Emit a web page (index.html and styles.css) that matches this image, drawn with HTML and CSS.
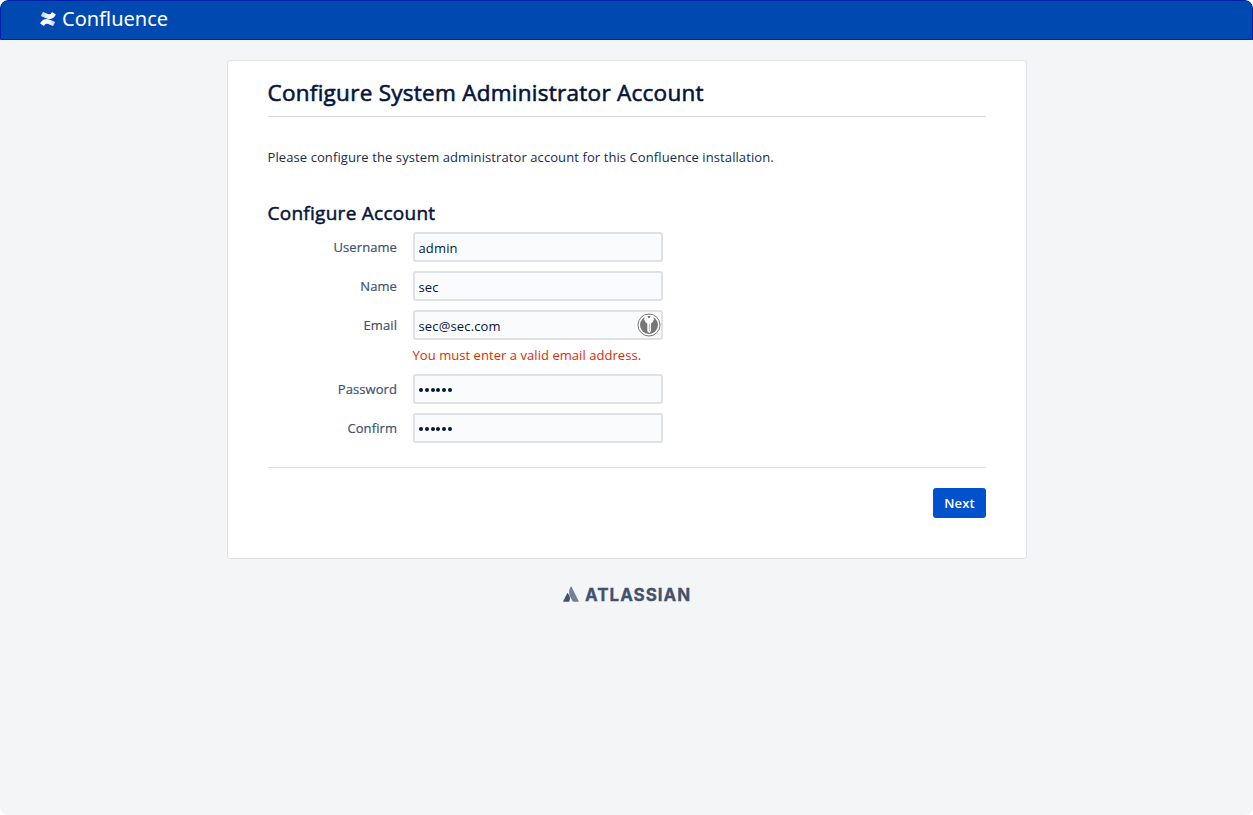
FILE: index.html
```html
<!DOCTYPE html>
<html lang="en">
<head>
<meta charset="utf-8">
<title>Configure System Administrator Account - Confluence</title>
<link rel="stylesheet" href="styles.css">
</head>
<body>
<div class="window">
  <header class="header">
    <svg class="header-mark" width="16" height="16" viewBox="0 0 16 16">
      <defs>
        <linearGradient id="lower" x1="0" y1="0" x2="1" y2="0"><stop offset="0" stop-color="#fff"/><stop offset=".5" stop-color="#fff"/><stop offset="1" stop-color="#fff" stop-opacity=".75"/></linearGradient>
        <linearGradient id="upper" x1="0" y1="0" x2="1" y2="0"><stop offset="0" stop-color="#fff" stop-opacity=".75"/><stop offset=".6" stop-color="#fff"/></linearGradient>
      </defs>
      <path fill="url(#lower)" d="M.6 11.6 .3 12.2Q.1 12.6.5 12.8L3.6 14.7Q4 14.9 4.3 14.5C5.5 12.5 6.2 12.3 8.2 13.1L12.7 14.9Q13.2 15 13.4 14.6L15 11.4Q15.1 11 14.7 10.8L10.6 9C6.4 7.2 3 8 .6 11.6Z"/>
      <path fill="url(#upper)" d="M15.4 4.4 15.7 3.8Q15.9 3.4 15.5 3.2L12.4 1.3Q12 1.1 11.7 1.5C10.5 3.5 9.8 3.7 7.8 2.9L3.3 1.1Q2.8 1 2.6 1.4L1 4.6Q.9 5 1.3 5.2L5.4 7C9.6 8.8 13 8 15.4 4.4Z"/>
    </svg>
    <span class="header-name">Confluence</span>
  </header>
  <main class="panel">
    <h1 class="title"><span>Configure System Administrator Account</span></h1>
    <p class="intro">Please configure the system administrator account for this Confluence installation.</p>
    <h2 class="subtitle">Configure Account</h2>
    <form class="form">
      <div class="row"><label class="label" for="username">Username</label><input class="field" id="username" type="text" value="admin"></div>
      <div class="row"><label class="label" for="name">Name</label><input class="field" id="name" type="text" value="sec"></div>
      <div class="row">
        <label class="label" for="email">Email</label>
        <div class="field-wrap">
          <input class="field" id="email" type="text" value="sec@sec.com">
          <svg class="key" width="24" height="24" viewBox="0 0 24 24">
            <circle cx="12" cy="12" r="11" fill="#fff" stroke="#777" stroke-width="1"/>
            <circle cx="12" cy="12" r="9" fill="#777"/>
            <path fill="#fff" d="M8.2 2.8H15.8L17 6.3 15.5 9.3 14 10.5V18L12.5 20 10.3 18.3V10.5L8.5 9.3 7 6.3Z"/>
            <path fill="#444" d="M10.3 3.2h3.4L12 5.2Z"/>
            <path d="M12.4 11V18.2" stroke="#aaa" stroke-width=".8"/>
          </svg>
        </div>
      </div>
      <p class="error">You must enter a valid email address.</p>
      <div class="row"><label class="label" for="password">Password</label><div class="field masked" id="password"><i></i><i></i><i></i><i></i><i></i><i></i></div></div>
      <div class="row"><label class="label" for="confirm">Confirm</label><div class="field masked" id="confirm"><i></i><i></i><i></i><i></i><i></i><i></i></div></div>
      <div class="actions"><button class="next" type="button">Next</button></div>
    </form>
  </main>
  <footer class="footer">
    <svg class="footer-mark" width="16" height="16" viewBox="0 0 16 16">
      <path fill="#42526e" d="M4.8 7.2Q4.5 6.8 4.2 7.3L.2 15.2Q0 15.7.5 15.7H5.9Q6.2 15.7 6.4 15.3C7.6 12.8 6.9 9.2 4.8 7.2Z"/>
      <path fill="#71809a" d="M7.7.4C5.5 3.9 5.7 7.7 7.1 10.5L9.6 15.3Q9.8 15.7 10.2 15.7H15.4Q16 15.7 15.7 15.2L8.4.4Q8 0 7.7.4Z"/>
    </svg>
    <span class="footer-name">ATLASSIAN</span>
  </footer>
</div>
</body>
</html>
```
FILE: styles.css
```css
* { box-sizing: border-box; }
body {
  margin: 0;
  background: #fff;
  color: #172b4d;
  font-family: "Open Sans", "Noto Sans", sans-serif;
  font-size: 13px;
}
h1, h2, p { margin: 0; white-space: nowrap; }
.window {
  height: 815px;
  overflow: hidden;
  border-radius: 8px;
  background: #f4f5f7;
}
.header {
  display: flex;
  align-items: center;
  height: 40px;
  padding: 0 0 2px 39px;
  border: 1px solid #0021a6;
  border-radius: 8px 8px 0 0;
  background: #0049b0;
}
.header-name {
  margin-left: 6px;
  color: #fff;
  font: 400 20px/30px "Noto Sans", sans-serif;
}
.panel {
  width: 800px;
  height: 499px;
  margin: 20px 0 0 227px;
  padding: 0 40px;
  border: 1px solid #dfe1e6;
  border-radius: 3px;
  background: #fff;
}
.title {
  height: 56px;
  padding-top: 16px;
  border-bottom: 1px solid #dcdcdf;
  color: #04153c;
  font-size: 22.5px;
  font-weight: 400;
  letter-spacing: .27px;
  line-height: 32px;
  -webkit-text-stroke: .6px #04153c;
}
.title span { margin-left: -.5px; }
.intro { margin-left: -.5px; padding-top: 30px; letter-spacing: .09px; line-height: 20px; }
.subtitle {
  margin-left: -.5px;
  padding-top: 34px;
  color: #04153c;
  font-size: 19px;
  font-weight: 400;
  letter-spacing: .27px;
  line-height: 24px;
  -webkit-text-stroke: .5px #04153c;
}
.form { padding-top: 7px; }
.row {
  display: flex;
  height: 30px;
  margin-bottom: 9px;
}
.label {
  width: 129px;
  margin-right: 16px;
  color: #42526e;
  letter-spacing: .08px;
  line-height: 30px;
  text-align: right;
  -webkit-text-stroke: .2px #42526e;
}
.field {
  display: block;
  width: 250px;
  height: 30px;
  padding: 2px 4px 0 3.5px;
  border: 2px solid #dfe1e6;
  border-radius: 3px;
  outline: none;
  background: #fafbfc;
  color: #06143c;
  font: inherit;
  letter-spacing: .15px;
}
.field-wrap { position: relative; }
.key { position: absolute; top: 3px; right: 2px; }
.error {
  margin: -3px 0 9px 144.5px;
  color: #de2b00;
  letter-spacing: .05px;
  line-height: 19px;
}
.masked { display: flex; align-items: center; gap: 1.8px; padding-left: 4px; }
.masked i { width: 4px; height: 4px; border-radius: 50%; background: #06143c; }
.actions {
  display: flex;
  justify-content: flex-end;
  margin-top: 24px;
  padding-top: 20px;
  border-top: 1px solid #dfe1e6;
}
.next {
  width: 53px;
  height: 30px;
  padding: 0;
  border: 0;
  border-radius: 3px;
  background: #0052cc;
  color: #fff;
  font: 600 13px/30px "Open Sans", sans-serif;
  letter-spacing: .1px;
}
.footer {
  display: flex;
  align-items: center;
  height: 20px;
  margin: 25px 0 0 563px;
}
.footer-mark { margin-bottom: 1px; }
.footer-name {
  margin: 1px 0 0 6px;
  color: #42526e;
  font: 700 17px/20px Inter, sans-serif;
  letter-spacing: 1px;
  -webkit-text-stroke: .3px #42526e;
}
```
